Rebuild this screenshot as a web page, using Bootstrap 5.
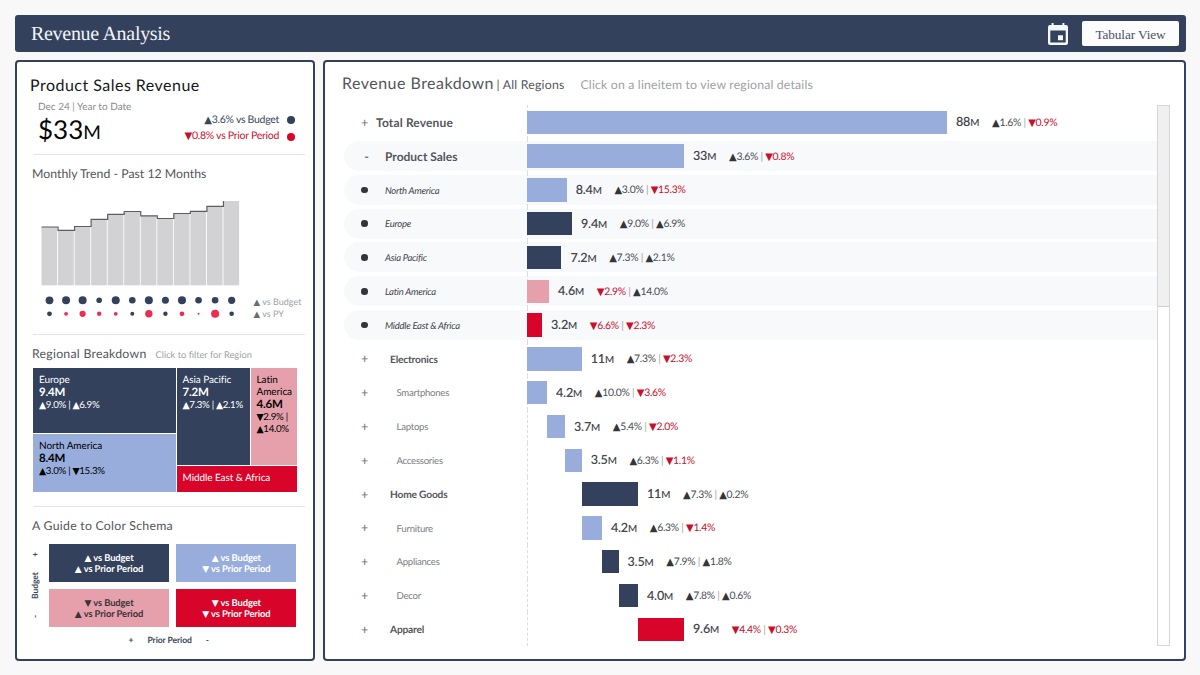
<!DOCTYPE html>
<html lang="en">
<head>
<meta charset="utf-8">
<meta name="viewport" content="width=device-width, initial-scale=1">
<title>Revenue Analysis</title>
<link href="https://cdn.jsdelivr.net/npm/bootstrap@5.3.0/dist/css/bootstrap.min.css" rel="stylesheet">
<style>
  :root { --navy:#33415c; --sky:#98addb; --rose:#e5a0ac; --crimson:#d90429; --grey:#54565b; }
  body { width:1200px; height:675px; overflow:hidden; background:#f8f8f9; font-family:Lato,"Liberation Sans",sans-serif; color:var(--grey); padding:15px 14px 14px 15px; line-height:1.2; text-rendering:geometricPrecision; }
  .topbar { height:37px; background:var(--navy); border-radius:3px; padding:0 7px 0 16px; }
  .serif { font-family:"Liberation Serif",serif; }
  .brand { font-size:20px; letter-spacing:-.3px; color:#f1f4fa; white-space:nowrap; }
  .tab-btn { width:97px; height:25px; border-radius:2px; background:#fcfcfd; color:#4a5467; font-size:13.3px; letter-spacing:-.12px; border:0; padding:2px 0 0; margin-left:14px; }
  .panel { border:2px solid var(--navy); border-radius:4px; background:#fff; height:600.5px; }
  .side { width:300px; }
  .nw { white-space:nowrap; }
  .tri { font-family:"DejaVu Sans",sans-serif; font-weight:400; font-style:normal; font-size:.96em; line-height:1; }
  .block { border-bottom:1.5px solid #e4e5e7; margin:0 8px 0 16px; }
  .h-main { font-size:16px; letter-spacing:.48px; line-height:16px; }
  .h-side { font-size:12.3px; line-height:16px; }
  .spread { letter-spacing:.25px; }
  .dot { width:8px; height:8px; border-radius:50%; }
  .kpis { margin:17.5px 10px 0 0; }
  .kpi { font-size:10.5px; line-height:16.7px; height:16.7px; letter-spacing:-.28px; }
  .period { font-size:10px; color:#8a8b8f; margin:7px 0 0 5px; }
  .amount { font-size:26px; line-height:32px; color:#050505; margin:0 0 0 5px; }
  .amount span { font-size:19px; }
  .hint { color:#a0a1a4; }
  .trend-row { margin-top:9.5px; }
  .trend-key { font-size:9px; line-height:12.5px; padding-top:104px; margin-left:6.5px; letter-spacing:.01px; }
  .trend-key .tri { color:#6b6c70; }
  .tmap { display:grid; width:264px; height:124px; grid-template-columns:142.5px 73px 46.5px; grid-template-rows:65px 31px 26px; gap:1px; color:#fff; font-size:10px; line-height:12px; }
  .tile { padding:6.2px 0 0 6px; white-space:nowrap; letter-spacing:-.08px; }
  .tile b { font-size:11.5px; font-weight:700; line-height:13.4px; display:block; letter-spacing:-.2px; }
  .tile i { font-style:normal; font-size:9.7px; letter-spacing:-.3px; display:block; }
  .tile-asia { grid-row:1/3; grid-column:2; } .tile-latin { grid-row:1/3; grid-column:3; } .tile-na { grid-row:2/4; grid-column:1; } .tile-mea { grid-row:3; grid-column:2/4; }
  .bg-navy { background:var(--navy); } .bg-sky { background:var(--sky); } .bg-rose { background:var(--rose); } .bg-crimson { background:var(--crimson); }
  .legend-grid { display:grid; grid-template-columns:120px 120px; grid-template-rows:38px 38px; column-gap:7.4px; row-gap:7.4px; font-size:9.4px; line-height:11.3px; font-weight:700; letter-spacing:-.1px; color:#fff; }
  .legend-grid > div { padding-top:1.6px; }
  .legend-grid .bg-rose { color:#3a3337; }
  .axis-label { font-size:8.6px; font-weight:700; color:#3b465c; letter-spacing:-.1px; }
  .budget-axis { width:17px; height:83px; }
  .upright { writing-mode:vertical-rl; transform:rotate(180deg); height:66px; margin:0 0 2px -2px; }
  .rows { width:813px; height:541px; }
  .line { height:33.8px; }
  .line-in { height:30px; width:813px; border-radius:15px 0 0 15px; }
  .hit { background:#f8f9fb; }
  .mark-col { width:41px; color:#6d6f74; font-size:12.5px; }
  .bullet { width:6.5px; height:6.5px; border-radius:50%; background:#33353b; }
  .lbl { width:142px; padding-top:1.5px; }
  .plot { height:33.8px; border-left:1px dashed #dcdde1; }
  .bar { height:23.4px; }
  .val { font-size:12.6px; font-weight:600; color:#44464c; margin-left:9px; letter-spacing:-.2px; }
  .val small { font-size:9.8px; }
  .delta { font-size:10.4px; margin-left:12.8px; letter-spacing:-.28px; padding-top:1.5px; }
  .up { color:#4c4e54; } .up .tri { color:#33353b; } .down { color:#c8102e; } .up-c { color:#3b465c; }
  .sep { color:#a0a1a4; }
  .l-total { font-size:12px; font-weight:700; width:151px; margin-left:-9px; letter-spacing:.15px; }
  .l-main { font-size:12px; font-weight:700; }
  .l-reg { font-size:9.5px; font-style:italic; color:#44464c; letter-spacing:-.26px; padding-top:3px; }
  .l-cat { font-size:10.2px; font-weight:700; padding-left:5px; letter-spacing:-.18px; padding-top:2px; }
  .l-sub { font-size:9.6px; padding-left:11.5px; color:#7b7d82; letter-spacing:-.26px; padding-top:3px; }
  .scroller { width:13px; height:541px; border:1.5px solid #d6d6d8; background:#fff; }
  .thumb { height:201px; background:#f1f0f1; border-bottom:1.5px solid #cfcfd1; }
  .head-row { height:43.4px; padding:13.5px 0 0 17px; }
</style>
</head>
<body>
<header class="topbar d-flex align-items-center">
  <span class="serif brand">Revenue Analysis</span>
  <svg class="ms-auto" width="20" height="22" viewBox="0 0 20 22"><path fill="#f4f6fa" fill-rule="evenodd" d="M3.6 0h2v2h8.8V0h2v2H18a2 2 0 0 1 2 2v16a2 2 0 0 1-2 2H2a2 2 0 0 1-2-2V4a2 2 0 0 1 2-2h1.600zM2.300 7.400v12.200h15.400V7.400zM10 12.200h5v5h-5z"/></svg>
  <button class="btn tab-btn serif" type="button">Tabular View</button>
</header>

<main class="d-flex gap-2 mt-2">
  <section class="panel side">
    <div class="block" style="height:93px"><div style="padding-top:16px">
      <div class="nw h-main" style="color:#17181a;margin-left:-3px">Product Sales Revenue</div>
      <div class="d-flex justify-content-between">
        <div>
          <div class="nw period">Dec 24 | Year to Date</div>
          <div class="nw amount">$33<span>M</span></div>
        </div>
        <div class="kpis">
          <div class="kpi d-flex align-items-center justify-content-end gap-2"><span class="up-c"><span class="tri">▲</span>3.6% vs Budget</span><span class="dot bg-navy"></span></div>
          <div class="kpi d-flex align-items-center justify-content-end gap-2"><span class="down"><span class="tri">▼</span>0.8% vs Prior Period</span><span class="dot bg-crimson"></span></div>
        </div>
      </div>
    </div></div>
    <div class="block" style="height:180px"><div style="padding-top:11px">
      <div class="h-side nw" style="margin-left:-1px">Monthly Trend - Past 12 Months</div>
      <div class="d-flex trend-row">
        <svg id="trend" width="214" height="130" viewBox="33 192 214 130"></svg>
        <div class="hint trend-key nw"><div><span class="tri">▲</span> vs Budget</div><div><span class="tri">▲</span> vs PY</div></div>
      </div>
    </div></div>
    <div class="block" style="height:172px"><div style="padding-top:10.5px">
      <div class="nw d-flex align-items-baseline" style="height:22px;margin-left:-1px"><span class="h-side spread">Regional Breakdown</span><span class="hint" style="font-size:9.3px;margin-left:9px">Click to filter for Region</span></div>
      <div class="tmap">
        <div class="tile bg-navy">Europe<b>9.4M</b><i><span class="tri">▲</span>9.0% | <span class="tri">▲</span>6.9%</i></div>
        <div class="tile tile-asia bg-navy">Asia Pacific<b>7.2M</b><i><span class="tri">▲</span>7.3% | <span class="tri">▲</span>2.1%</i></div>
        <div class="tile tile-latin bg-rose text-black">Latin<br>America<b>4.6M</b><i><span class="tri">▼</span>2.9% |<br><span class="tri">▲</span>14.0%</i></div>
        <div class="tile tile-na bg-sky text-black">North America<b>8.4M</b><i><span class="tri">▲</span>3.0% | <span class="tri">▼</span>15.3%</i></div>
        <div class="tile tile-mea bg-crimson">Middle East &amp; Africa</div>
      </div>
    </div></div>
    <div style="margin:11px 0 0 15px">
      <div class="h-side nw spread">A Guide to Color Schema</div>
      <div class="d-flex" style="margin-top:10px">
        <div class="budget-axis axis-label d-flex align-items-center"><span class="upright d-flex justify-content-between"><span>-</span><span>Budget</span><span>+</span></span></div>
        <div class="legend-grid text-center nw">
          <div class="bg-navy d-flex flex-column justify-content-center"><div><span class="tri">▲</span> vs Budget</div><div><span class="tri">▲</span> vs Prior Period</div></div>
          <div class="bg-sky d-flex flex-column justify-content-center"><div><span class="tri">▲</span> vs Budget</div><div><span class="tri">▼</span> vs Prior Period</div></div>
          <div class="bg-rose d-flex flex-column justify-content-center"><div><span class="tri">▼</span> vs Budget</div><div><span class="tri">▲</span> vs Prior Period</div></div>
          <div class="bg-crimson d-flex flex-column justify-content-center"><div><span class="tri">▼</span> vs Budget</div><div><span class="tri">▼</span> vs Prior Period</div></div>
        </div>
      </div>
      <div class="axis-label d-flex nw" style="padding:8px 0 0 96.5px;gap:14px"><span>+</span><span>Prior Period</span><span>-</span></div>
    </div>
  </section>

  <section class="panel flex-grow-1">
    <div class="nw d-flex align-items-baseline head-row"><span class="h-main">Revenue Breakdown</span><span style="font-size:12.3px;margin-left:2.5px;letter-spacing:.2px">| All Regions</span><span class="hint" style="font-size:12.3px;margin-left:16px;letter-spacing:.16px">Click on a lineitem to view regional details</span></div>
    <div class="d-flex" style="padding-left:19px"><div class="rows" id="rows"></div><div class="scroller"><div class="thumb"></div></div></div>
  </section>
</main>

<script src="https://cdn.jsdelivr.net/npm/bootstrap@5.3.0/dist/js/bootstrap.bundle.min.js"></script>
<script>
  // kind, label, bar offset, bar width, colour, value, vs budget, vs prior period
  const rows = [
    ['total','Total Revenue',0,420,'sky','88',1.6,-0.9],
    ['main','Product Sales',0,157,'sky','33',3.6,-0.8],
    ['reg','North America',0,39.7,'sky','8.4',3.0,-15.3],
    ['reg','Europe',0,45,'navy','9.4',9.0,6.9],
    ['reg','Asia Pacific',0,34.4,'navy','7.2',7.3,2.1],
    ['reg','Latin America',0,22,'rose','4.6',-2.9,14.0],
    ['reg','Middle East &amp; Africa',0,15,'crimson','3.2',-6.6,-2.3],
    ['cat','Electronics',0,54.7,'sky','11',7.3,-2.3],
    ['sub','Smartphones',0,20,'sky','4.2',10.0,-3.6],
    ['sub','Laptops',20,18,'sky','3.7',5.4,-2.0],
    ['sub','Accessories',38,16.7,'sky','3.5',6.3,-1.1],
    ['cat','Home Goods',54.7,56.3,'navy','11',7.3,0.2],
    ['sub','Furniture',54.7,20.3,'sky','4.2',6.3,-1.4],
    ['sub','Appliances',75,16.5,'navy','3.5',7.9,1.8],
    ['sub','Decor',91.5,19.5,'navy','4.0',7.8,0.6],
    ['cat','Apparel',111,46,'crimson','9.6',-4.4,-0.3]
  ];
  const part = v => `<span class="${v < 0 ? 'down' : 'up'}"><span class="tri">${v < 0 ? '▼' : '▲'}</span>${Math.abs(v).toFixed(1)}%</span>`;
  const marks = { reg: '<span class="bullet"></span>', main: '<b class="ps-1">-</b>' };
  document.getElementById('rows').innerHTML = rows.map(([k, l, o, w, c, v, b, p]) => `
    <div class="line d-flex align-items-center nw"><div class="line-in d-flex align-items-center ${k === 'main' || k === 'reg' ? 'hit' : ''}">
      <div class="mark-col d-flex justify-content-center">${marks[k] || '+'}</div>
      <div class="lbl l-${k}">${l}</div>
      <div class="plot d-flex align-items-center"><div class="bar bg-${c}" style="margin-left:${o - 1}px;width:${w}px"></div>
      <div class="val">${v}<small>M</small></div><div class="delta">${part(b)} <span class="sep">|</span> ${part(p)}</div></div>
    </div></div>`).join('');

  // monthly steps, with one dot per month for each comparison (negative = decline)
  const tops = [227,230.3,226.5,219.3,214.3,211.5,215.8,218.5,213.5,211.3,206.3,201];
  const r1 = [3.9,4,4,2.8,4,3.3,4,3.5,4,3.3,3.3,3.6];
  const r2 = [2.4,-1.9,-3.1,-2.2,-1.9,2,-3.7,2.2,-2.4,-1,-4,2.3];
  let s = '', d = '';
  tops.forEach((y, i) => {
    const x = 41.5 + i * 16.54, cx = 49.5 + i * 16.56;
    s += `<rect x="${x}" y="${y}" width="15.7" height="${285.3 - y}" fill="#d2d2d4"/>`;
    d += i === 0 ? `M${x} ${y}h16.54` : i < 11 ? `V${y}h16.54` : `V${y}`;
    s += `<circle cx="${cx}" cy="300.3" r="${r1[i]}" fill="#33415c"/><circle cx="${cx}" cy="313.8" r="${Math.abs(r2[i])}" fill="${r2[i] < 0 ? '#ef2b50' : '#33415c'}"/>`;
  });
  document.getElementById('trend').innerHTML = s + `<path d="${d}" fill="none" stroke="#5c5d61" stroke-width="1.2"/>`;
</script>
</body>
</html>
